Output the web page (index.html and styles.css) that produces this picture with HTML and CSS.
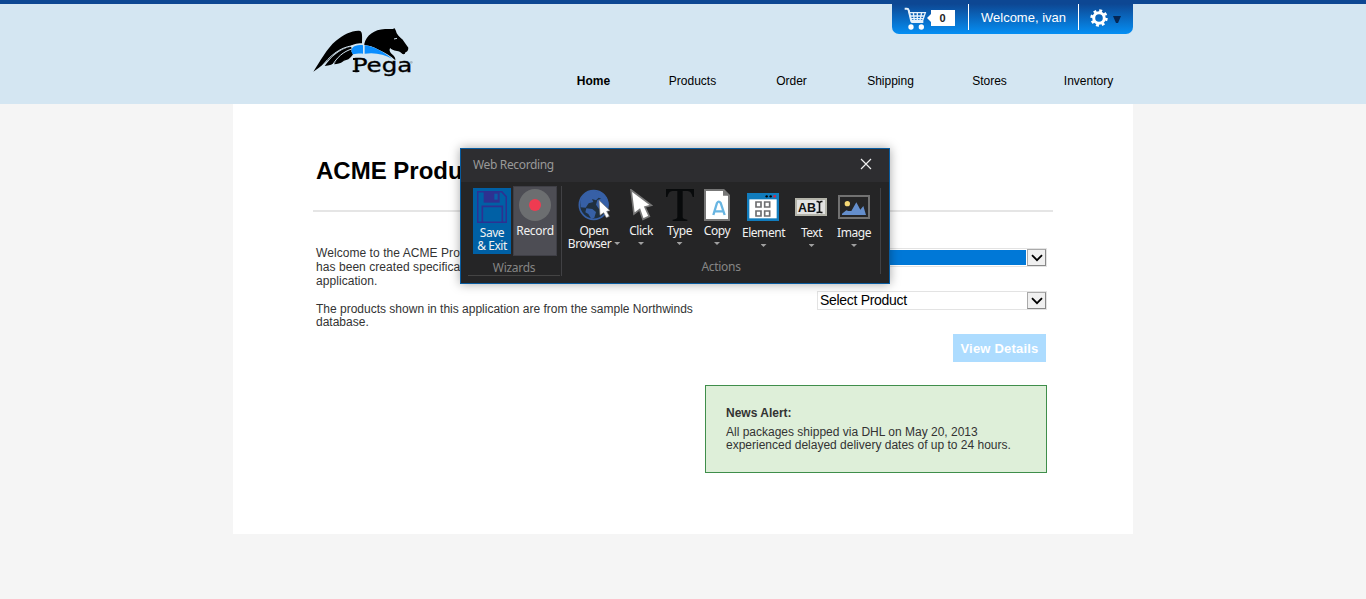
FILE: index.html
```
<!DOCTYPE html>
<html lang="en">
<head>
<meta charset="utf-8">
<title>ACME Products</title>
<link rel="stylesheet" href="styles.css">
</head>
<body>
<header class="site-header">
  <div class="header-inner">
    <svg class="logo" viewBox="0 0 390 195" role="img" aria-label="Pega">
      <path d="M40 155C60 125 80 85 108 62C130 44 155 31 177 32C187 33 187 42 186 70C170 70 155 74 148 82C130 84 112 94 100 105C80 124 62 142 40 155Z"/>
      <path d="M74 138C92 113 114 89 153 80L156 88C135 96 122 111 110 124C99 133 88 138 74 138Z"/>
      <path d="M102 133C116 112 132 93 155 87L154 100C143 106 138 117 130 124C121 131 112 133 102 133Z"/>
      <path d="M131 122C137 110 144 100 155 95L159 103C154 111 146 121 131 122Z"/>
      <path class="logo-gap" d="M64 141C88 110 116 83 158 77M96 137C112 112 128 95 158 86"/>
      <path d="M193 71C199 47 222 28 255 27L278 27L284 25L288 33C289 42 299 51 307 58L325 83C325 90 322 96 317 96L314 102C306 104 305 98 299 95C289 92 277 92 271 84C266 90 270 98 278 104C284 109 287 115 286 121C273 107 255 98 236 89C221 80 204 76 193 75Z"/>
      <path class="logo-gap" d="M282 57L291 55"/>
      <path class="logo-wave" d="M157 84C164 76 176 74 189 76L189 101C177 100 166 102 160 103C153 99 154 90 157 84ZM194 76C222 79 250 95 276 116C254 103 224 96 194 101Z"/>
      <text class="logo-text" x="158" y="156" textLength="179" lengthAdjust="spacingAndGlyphs">Pega</text>
      <path d="M159 114H172V120H159ZM158 151H178V156H158Z"/>
      <circle class="logo-mark" cx="334" cy="127" r="4"/>
    </svg>
    <div class="header-right">
      <div class="account-bar">
        <a class="cart">
          <svg class="cart-icon" viewBox="0 0 69 69">
            <path d="M2 5H9Q13 5 14 10L21 39Q22 45 27 45H58" fill="none" stroke="#e6f1fb" stroke-width="6"/>
            <path d="M14 17H64L56 41H21M17 27H60M19 35H58M28 17L31 41M40 17V41M53 17L48 41" fill="none" stroke="#e6f1fb" stroke-width="4"/>
            <circle cx="21" cy="60" r="8"/><circle cx="52" cy="60" r="8"/>
          </svg>
          <span class="cart-count">0</span>
        </a>
        <span class="welcome">Welcome, ivan</span>
        <a class="settings">
          <svg class="gear-icon" viewBox="0 0 18 18"><circle cx="9" cy="9" r="5.3" fill="none" stroke="#fff" stroke-width="3"/><circle cx="9" cy="9" r="7.4" fill="none" stroke="#fff" stroke-width="2.6" stroke-dasharray="2.9 2.91"/></svg>
          <svg class="caret-icon" viewBox="0 0 8 7"><path d="M0 0H8L5 7H3Z"/></svg>
        </a>
      </div>
      <nav class="nav"><a class="active">Home</a><a>Products</a><a>Order</a><a>Shipping</a><a>Stores</a><a>Inventory</a></nav>
    </div>
  </div>
</header>

<main class="page">
  <h1>ACME Products</h1>
  <div class="columns">
    <section class="intro">
      <p class="lead">Welcome to the ACME Products<br>has been created specifically<br>application.</p>
      <p class="source">The products shown in this application are from the sample Northwinds<br>database.</p>
    </section>
    <section class="side">
      <div class="select selected"><span class="value"></span><span class="arrow"><svg viewBox="0 0 12 8"><path d="M1 1.2L6 6.2L11 1.2"/></svg></span></div>
      <div class="select"><span class="value">Select Product</span><span class="arrow"><svg viewBox="0 0 12 8"><path d="M1 1.2L6 6.2L11 1.2"/></svg></span></div>
      <button class="details">View Details</button>
      <div class="news"><strong>News Alert:</strong><p>All packages shipped via DHL on May 20, 2013<br>experienced delayed delivery dates of up to 24 hours.</p></div>
    </section>
  </div>
</main>

<div class="recorder" role="dialog">
  <div class="titlebar"><span>Web Recording</span>
    <svg class="close" viewBox="0 0 12 12"><path d="M1 1L11 11M11 1L1 11"/></svg>
  </div>
  <div class="ribbon">
    <div class="group wizards">
      <div class="tools">
        <div class="tool save">
          <svg width="30" height="32" viewBox="0 0 90 96"><path d="M2 2H74L88 17V94H2Z" fill="none" stroke="#2d3191" stroke-width="5"/><path d="M20 2H68V35H20Z" fill="#2d3191"/><path d="M52 8H62V26H52Z" fill="#0a5ea8"/><path d="M16 94V46H76V94" fill="none" stroke="#2d3191" stroke-width="5"/></svg>
          <span>Save<br>&amp; Exit</span>
        </div>
        <div class="tool record">
          <svg width="32" height="32" viewBox="0 0 32 32"><circle cx="16" cy="16" r="16" fill="#6c6e70"/><circle cx="16" cy="16" r="6" fill="#ef3b51"/></svg>
          <span>Record</span>
        </div>
      </div>
      <div class="caption">Wizards</div>
    </div>
    <div class="group actions">
      <div class="tools">
        <div class="tool open">
          <svg width="32" height="32" viewBox="0 0 96 96"><circle cx="47" cy="48" r="43" fill="#20303f" stroke="#3760a6" stroke-width="5"/><path d="M7 39C12 16 28 6 45 4L78 14L84 24L72 30L62 26L54 34L42 30L46 39L32 43L23 56L8 55ZM59 5C78 9 90 25 92 48L84 62L73 57L63 60L54 47L58 33L69 29L62 23L69 14ZM25 58L43 60L54 69L49 86L40 90L31 75L22 70Z" fill="#3760a6"/><path d="M63 34L96 65L86 67L94 82L85 86L77 71L66 79Z" fill="#fff" stroke="#777" stroke-width="2"/></svg>
          <span>Open<br>Browser<i class="drop"></i></span>
        </div>
        <div class="tool click">
          <svg width="24" height="32" viewBox="0 0 72 96"><path d="M6 3L67 49L48 54L61 82L42 91L32 62L15 75Z" fill="#fff" stroke="#777" stroke-width="5"/></svg>
          <span>Click</span><i class="drop"></i>
        </div>
        <div class="tool type">
          <svg width="28" height="32" viewBox="0 0 84 96"><path d="M0 0H84V24H80Q76 6 65 6H50V84Q50 91 64 92V96H20V92Q34 91 34 84V6H19Q8 6 4 24H0Z" fill="#080a0b"/></svg>
          <span>Type</span><i class="drop"></i>
        </div>
        <div class="tool copy">
          <svg width="26" height="32" viewBox="0 0 78 96"><path d="M3 3H59L75 19V93H3Z" fill="#fff" stroke="#777" stroke-width="6"/><path d="M57 3V20H75Z" fill="#777"/><path d="M28 78L39 42Q44 34 50 42L62 78M33 67H57" fill="none" stroke="#68b5e2" stroke-width="7"/></svg>
          <span>Copy</span><i class="drop"></i>
        </div>
        <div class="tool element low">
          <svg width="32" height="28" viewBox="0 0 96 84"><path d="M0 0H96V84H0Z" fill="#117cbd"/><path d="M7 19H89V76H7Z" fill="#fff"/><g fill="none" stroke="#6d6e70" stroke-width="5"><path d="M27 27H42V42H27ZM53 27H68V42H53ZM27 54H42V69H27ZM53 54H68V69H53Z"/></g><circle cx="59" cy="10" r="3.5"/><circle cx="71" cy="10" r="3.5"/><circle cx="83" cy="10" r="4" fill="#d52945"/></svg>
          <span>Element</span><i class="drop"></i>
        </div>
        <div class="tool text low">
          <svg width="32" height="18" viewBox="0 0 32 18"><path d="M1 1H31V17H1Z" fill="#e2e2e1" stroke="#b4b4aa" stroke-width="2"/><text class="ab" x="3" y="13.5" textLength="18" lengthAdjust="spacingAndGlyphs">AB</text><path d="M21.5 3.5H23L24.5 4.5L26 3.5H27.5M24.5 4V14M21.5 14.5H23L24.5 13.5L26 14.5H27.5" fill="none" stroke="#111" stroke-width="1.6"/></svg>
          <span>Text</span><i class="drop"></i>
        </div>
        <div class="tool image low">
          <svg width="32" height="24" viewBox="0 0 96 72"><path d="M3 3H93V69H3Z" fill="#252526" stroke="#717171" stroke-width="6"/><circle cx="28" cy="26" r="8" fill="#f5d875"/><path d="M12 60V56L25 46L31 48L40 48L55 22L67 44L76 33L84 60Z" fill="#648ecc"/></svg>
          <span>Image</span><i class="drop"></i>
        </div>
      </div>
      <div class="caption">Actions</div>
    </div>
  </div>
</div>
</body>
</html>
```
FILE: styles.css
```
* { box-sizing: border-box; }
body { margin: 0; height: 599px; overflow: hidden; background: #f5f5f5; color: #333; font: 12px/14px "Liberation Sans", Arial, sans-serif; }
p, h1 { margin: 0; }
svg { display: block; flex: none; }

.site-header { height: 104px; background: #d4e6f2; border-top: 4px solid #0d4793; }
.header-inner { width: 900px; margin: 0 auto; display: flex; justify-content: space-between; padding-left: 67px; }
.logo { width: 130px; height: 65px; margin-top: 16px; fill: #000; }
.logo-wave { fill: #0b8eff; }
.logo-gap { fill: none; stroke: #d4e6f2; stroke-width: 3; }
.logo-text { font: 57px "DejaVu Sans", sans-serif; stroke: #000; stroke-width: 1; }
.logo-mark { fill: #a8bac7; }
.header-right { display: flex; flex-direction: column; align-items: flex-end; }
.account-bar { display: flex; align-items: center; width: 241px; height: 30px; border-radius: 0 0 7px 7px; background: linear-gradient(#0d4793, #058ff4); color: #fff; }
.cart { display: flex; align-items: center; width: 77px; height: 26px; padding-left: 12px; border-right: 1px solid #fff; align-self: flex-start; }
.cart-icon { width: 23px; height: 23px; margin-top: 3px; fill: #fff; }
.cart-count { width: 28px; height: 16px; margin: 2px 0 0; padding-left: 3px; background: #fff; clip-path: polygon(0 50%, 4px 25%, 4px 0, 100% 0, 100% 100%, 4px 100%, 4px 75%); color: #222; text-align: center; font: bold 11px/17px "Liberation Sans", Arial, sans-serif; }
.welcome { width: 110px; height: 26px; align-self: flex-start; border-right: 1px solid #fff; text-align: center; font-size: 13px; line-height: 27px; }
.settings { display: flex; align-items: center; gap: 5px; padding-left: 11px; }
.gear-icon { width: 18px; height: 18px; margin-top: -2px; }
.caret-icon { width: 8px; height: 7px; margin-top: 1px; fill: #052654; }
.nav { display: flex; width: 594px; margin: 40px -5px 0 0; color: #000; }
.nav a { width: 99px; text-align: center; }
.active { font-weight: bold; }

.page { width: 900px; height: 430px; margin: 0 auto; padding: 51px 80px 0; background: #fff; }
h1 { height: 57px; padding-left: 3px; border-bottom: 2px solid #e5e5e5; color: #000; font-size: 24px; line-height: 32px; }
.columns { display: flex; justify-content: space-between; padding: 34px 6px 0 3px; }
.intro { width: 385px; }
.lead { letter-spacing: .06px; }
.source { margin-top: 15px; line-height: 13px; }
.side { display: flex; flex-direction: column; align-items: flex-end; width: 342px; padding-top: 2px; }
.select { display: flex; width: 230px; height: 19px; padding: 1px; margin: 0 0 24px; border: 1px solid #e3e3e3; background: #fff; color: #000; font-size: 14px; line-height: 15px; letter-spacing: -.3px; }
.value { flex: 1; margin-right: 1px; padding-left: 1px; }
.selected .value { background: #0078d7; }
.arrow { display: flex; align-items: center; justify-content: center; width: 19px; height: 17px; margin: -1px -1px 0 0; background: #f0f0f0; border: 1px solid #888; border-top-color: #aaa; border-left-color: #aaa; }
.arrow svg { width: 12px; height: 8px; fill: none; stroke: #000; stroke-width: 1.8; }
.details { width: 93px; height: 28px; margin-right: 1px; padding: 0; border: 0; background: #addcff; color: #fff; font: bold 13px "Liberation Sans", Arial, sans-serif; letter-spacing: .2px; }
.news { width: 342px; height: 88px; margin-top: 23px; padding: 21px 20px 0; background: #deefd9; border: 1px solid #3f8e4b; line-height: 13px; }
.news strong { display: block; margin-bottom: 6px; }

.recorder { position: absolute; left: 460px; top: 148px; width: 430px; height: 136px; border: 1px solid #075b9f; background: #252526; color: #f1f1f1; box-shadow: 0 0 10px rgba(0,0,0,.35); font: 12px/13px "Noto Sans", "Open Sans", sans-serif; }
.titlebar { display: flex; align-items: center; justify-content: space-between; height: 33px; padding: 0 17px 2px 12px; background: #2d2d30; color: #999; letter-spacing: -.35px; }
.close { width: 12px; height: 12px; margin-top: -1px; fill: none; stroke: #eee; stroke-width: 1.2; }
.ribbon { display: flex; padding-left: 7px; }
.group { display: flex; flex-direction: column; }
.wizards { width: 94px; height: 90px; margin-top: 4px; border-right: 1px solid #414144; }
.tools { display: flex; height: 75px; }
.wizards .tools { padding-left: 5px; gap: 2px; }
.tool { display: flex; flex-direction: column; align-items: center; text-align: center; letter-spacing: -.45px; padding-top: 3px; }
.save { width: 38px; height: 66px; margin-top: 2px; background: #0060a5; }
.save span { margin-top: 3px; }
.record { width: 44px; height: 70px; border: 1px solid #3f3f46; background: #4d4d54; padding-top: 2px; }
.record span { margin-top: 3px; letter-spacing: -.3px; }
.caption { color: #858585; text-align: center; line-height: 14px; letter-spacing: -.3px; }
.wizards .caption { width: 92px; height: 15px; border-bottom: 1px solid #444; }
.actions { width: 319px; height: 86px; margin-top: 6px; border-right: 1px solid #414144; }
.actions .tools { height: 74px; padding-left: 6px; }
.actions .tool { padding-top: 1px; }
.actions span { margin-top: 3px; }
.open { width: 52px; }
.click { width: 42px; }
.type { width: 35px; }
.copy { width: 40px; }
.element { width: 53px; }
.text { width: 43px; }
.image { width: 42px; }
.element svg, .text svg { margin-left: -1px; }
.actions .element { padding-top: 5px; }
.actions .element span { margin-top: 5px; }
.actions .text { padding-top: 10px; }
.actions .text span { margin-top: 10px; }
.actions .image { padding-top: 7px; }
.actions .image span { margin-top: 7px; }
.drop { display: block; width: 6px; height: 3px; margin-top: 5px; background: #a0a0a0; clip-path: polygon(0 0, 100% 0, 50% 100%); }
.open span { white-space: nowrap; }
.open .drop { display: inline-block; margin: 0 0 3px 3px; }
.ab { font: bold 12px "Liberation Sans", Arial, sans-serif; fill: #111; letter-spacing: 0; }
```
